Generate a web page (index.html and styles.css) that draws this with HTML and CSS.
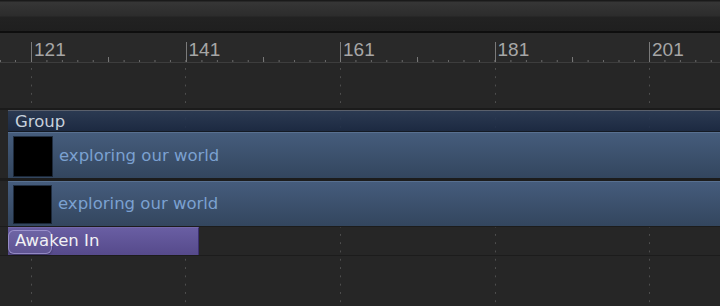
FILE: index.html
```html
<!DOCTYPE html>
<html>
<head>
<meta charset="utf-8">
<link rel="stylesheet" href="styles.css">
</head>
<body>
<div class="screen">
  <div class="topbar"></div>
  <div class="ruler">
    <div class="cell"><span class="num">121</span></div>
    <div class="cell"><span class="num">141</span></div>
    <div class="cell"><span class="num">161</span></div>
    <div class="cell"><span class="num">181</span></div>
    <div class="cell"><span class="num">201</span></div>
  </div>
  <div class="tracks">
    <div class="row empty"></div>
    <div class="row group-row"><div class="group">Group</div></div>
    <div class="row clip-row first"><div class="clip"><div class="thumb"></div><span class="title">exploring our world</span></div></div>
    <div class="row clip-row second"><div class="clip"><div class="thumb"></div><span class="title">exploring our world</span></div></div>
    <div class="row fx-row"><div class="fx"><div class="handle"></div><span class="fx-name">Awaken In</span></div></div>
  </div>
</div>
</body>
</html>
```

FILE: styles.css
```css
html, body {
  margin: 0;
  padding: 0;
}
body {
  width: 720px;
  height: 306px;
  overflow: hidden;
  background: #262626;
  font-family: "DejaVu Sans", "Liberation Sans", sans-serif;
}
.screen {
  width: 720px;
  height: 306px;
  display: flex;
  flex-direction: column;
  overflow: hidden;
}
.topbar {
  height: 31px;
  border-bottom: 2px solid #0e0e0e;
  background: linear-gradient(to bottom, #1a1a1a 0, #1a1a1a 1px, #363636 2px, #2c2c2c 16px, #222222 17px, #1f1f1f 31px);
  flex: 0 0 auto;
}
.ruler {
  height: 29px;
  border-bottom: 1px solid #3d3d3d;
  background-color: #292929;
  background-image: linear-gradient(#6c6c6c, #6c6c6c), linear-gradient(#6c6c6c, #6c6c6c);
  background-size: 1px 2px, 1px 2px;
  background-position: 0px bottom, 15px bottom;
  background-repeat: no-repeat;
  padding-left: 31px;
  display: flex;
  flex: 0 0 auto;
  overflow: hidden;
}
.cell {
  flex: 0 0 154.5px;
  box-sizing: border-box;
  padding: 6px 0 0 3px;
  background-image:
    linear-gradient(#7a7a7a, #7a7a7a),
    linear-gradient(#777777, #777777),
    linear-gradient(to right, #6c6c6c 1px, transparent 1px);
  background-size: 1px 20px, 1px 5px, 15.45px 2px;
  background-position: 0 bottom, 77px bottom, 0 bottom;
  background-repeat: no-repeat, no-repeat, repeat-x;
}
.num {
  font-family: "Liberation Sans Narrow", "Liberation Sans", sans-serif;
  font-size: 19px;
  line-height: 22px;
  color: #a6a6a6;
}
.tracks {
  flex: 1 1 auto;
  display: flex;
  flex-direction: column;
  background-image:
    linear-gradient(to bottom, #4e4e4e 2px, transparent 2px),
    linear-gradient(to bottom, #4e4e4e 2px, transparent 2px),
    linear-gradient(to bottom, #4e4e4e 2px, transparent 2px),
    linear-gradient(to bottom, #4e4e4e 2px, transparent 2px),
    linear-gradient(to bottom, #4e4e4e 2px, transparent 2px);
  background-size: 1px 8.3px;
  background-repeat: repeat-y;
  background-position: 31px 5px, 185px 5px, 340px 5px, 495px 5px, 649px 5px;
}
.row {
  display: flex;
  padding-left: 8px;
}
.empty {
  height: 45px;
  border-bottom: 2px solid #1b1b1b;
}
.group {
  flex: 1 1 auto;
  height: 22px;
  box-sizing: border-box;
  border-top: 1px solid #5a606c;
  border-bottom: 1px solid #141a24;
  background: linear-gradient(to bottom, rgba(44, 61, 89, 0.86), rgba(27, 42, 69, 0.88));
  color: #c8d0db;
  font-size: 16.5px;
  line-height: 20px;
  padding: 1px 0 0 7px;
}
.clip {
  flex: 1 1 auto;
  display: flex;
  align-items: center;
  box-sizing: border-box;
  border-top: 1px solid #587090;
  background: linear-gradient(to bottom, #455c7c, #33465e);
}
.first .clip {
  height: 46px;
}
.first {
  border-bottom: 3px solid #1c1c1c;
}
.second .clip {
  height: 45px;
}
.second {
  border-bottom: 1px solid #1c1c1c;
}
.thumb {
  background: #000;
  margin-left: 6px;
  box-shadow: 0 0 0 1px rgba(10, 16, 26, 0.6);
}
.first .thumb {
  width: 38px;
  height: 39px;
  margin-top: 1px;
}
.second .thumb {
  width: 37px;
  height: 37px;
  margin-top: 1px;
}
.title {
  margin-left: 7px;
  color: #7ba1d1;
  font-size: 16.5px;
  line-height: 20px;
}
.fx-row {
  border-bottom: 1px solid #1c1c1c;
}
.fx {
  position: relative;
  width: 191px;
  height: 28px;
  box-sizing: border-box;
  border-top: 1px solid #7468aa;
  border-right: 1px solid #3c3070;
  background: linear-gradient(to bottom, #695ea3, #564a8b);
  color: #f1f1f4;
  font-size: 16.5px;
  line-height: 20px;
  padding: 3px 0 0 7px;
}
.handle {
  position: absolute;
  left: 0;
  top: 2px;
  width: 44px;
  height: 24px;
  box-sizing: border-box;
  border: 1px solid rgba(190, 180, 235, 0.55);
  border-radius: 6px;
  background: rgba(255, 255, 255, 0.05);
  box-shadow: 0 1px 2px rgba(0, 0, 0, 0.35);
}
.fx-name {
  position: relative;
}
```
